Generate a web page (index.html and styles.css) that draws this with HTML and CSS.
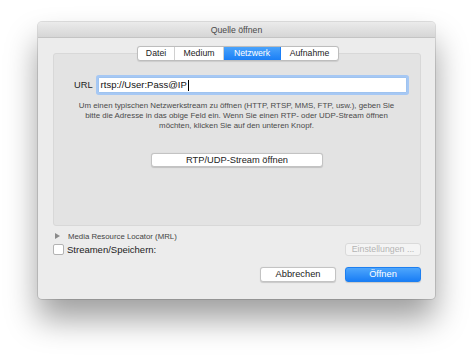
FILE: index.html
```html
<!DOCTYPE html>
<html>
<head>
<meta charset="utf-8">
<link rel="stylesheet" href="styles.css">
</head>
<body>
<div class="window">
  <div class="titlebar">Quelle öffnen</div>
  <div class="content">
    <div class="tabs">
      <div class="tab">Datei</div>
      <div class="tab">Medium</div>
      <div class="tab active">Netzwerk</div>
      <div class="tab">Aufnahme</div>
    </div>
    <div class="group">
      <div class="url-row">
        <span class="label">URL</span>
        <div class="input">rtsp://User:Pass@IP<span class="caret"></span></div>
      </div>
      <p class="desc">Um einen typischen Netzwerkstream zu öffnen (HTTP, RTSP, MMS, FTP, usw.), geben Sie<br>bitte die Adresse in das obige Feld ein. Wenn Sie einen RTP- oder UDP-Stream öffnen<br>möchten, klicken Sie auf den unteren Knopf.</p>
      <div class="btn rtp">RTP/UDP-Stream öffnen</div>
    </div>
    <div class="mrl"><span class="tri"></span>Media Resource Locator (MRL)</div>
    <div class="stream-row">
      <label class="check"><span class="box"></span>Streamen/Speichern:</label>
      <div class="btn disabled">Einstellungen ...</div>
    </div>
    <div class="actions">
      <div class="btn cancel">Abbrechen</div>
      <div class="btn primary">Öffnen</div>
    </div>
  </div>
</div>
</body>
</html>
```
FILE: styles.css
```css
html, body {
  margin: 0;
  padding: 0;
  background: #ffffff;
}
body {
  width: 474px;
  height: 355px;
  overflow: hidden;
  padding: 22px 0 0 38px;
  box-sizing: border-box;
  font-family: "Liberation Sans", Arial, sans-serif;
  color: #222;
}
.window {
  width: 397px;
  height: 277px;
  background: #ececec;
  border-radius: 4px;
  box-shadow: 0 0 0 1px rgba(0,0,0,0.12), 0 20px 32px rgba(0,0,0,0.38);
  display: flex;
  flex-direction: column;
  overflow: hidden;
}
.titlebar {
  height: 15px;
  line-height: 16px;
  text-align: center;
  font-size: 8.7px;
  color: #4a4a4a;
  background: linear-gradient(#ebebeb, #d6d6d6);
  border-bottom: 1px solid #c4c4c4;
  flex: none;
}
.content {
  padding: 8px 14px 0 15px;
  display: flex;
  flex-direction: column;
}
.tabs {
  align-self: center;
  display: flex;
  position: relative;
  z-index: 1;
  margin-left: 2px;
  background: #fff;
  border: 1px solid #bdbdbd;
  border-radius: 3px;
  height: 13px;
  overflow: hidden;
  box-shadow: 0 0.5px 1px rgba(0,0,0,0.1);
}
.tab {
  font-size: 8.7px;
  line-height: 13px;
  text-align: center;
  border-right: 1px solid #d0d0d0;
  color: #222;
}
.tab:nth-child(1) { width: 36px; }
.tab:nth-child(2) { width: 48px; }
.tab:nth-child(3) { width: 56px; }
.tab:nth-child(4) { width: 57px; border-right: none; }
.tab.active {
  background: linear-gradient(#4aa3fb, #1b7ff6);
  color: #fff;
  border-right-color: #1b7ff6;
}
.group {
  margin-top: -8px;
  height: 173px;
  box-sizing: border-box;
  background: #e3e3e3;
  border: 1px solid #d8d8d8;
  border-radius: 3px;
  padding: 23px 13px 0 20px;
  display: flex;
  flex-direction: column;
}
.url-row {
  display: flex;
  align-items: center;
  gap: 5px;
}
.label {
  font-size: 9.3px;
  color: #222;
}
.input {
  flex: 1;
  height: 14px;
  line-height: 14px;
  background: #fff;
  border: 1px solid #9fc3ef;
  box-shadow: 0 0 0 2px #a6c8f4;
  border-radius: 1px;
  padding: 0 2px;
  font-size: 9.5px;
  color: #111;
  display: flex;
  align-items: center;
}
.caret {
  display: inline-block;
  width: 1px;
  height: 11px;
  background: #000;
  margin-left: 1px;
}
.desc {
  margin: 8px 0 0 -8px;
  width: 360px;
  align-self: center;
  font-size: 7.9px;
  line-height: 10px;
  text-align: center;
  color: #4a4a4a;
  white-space: nowrap;
}
.btn {
  background: #fff;
  border: 1px solid #c3c3c3;
  border-radius: 3px;
  box-shadow: 0 0.5px 1px rgba(0,0,0,0.15);
  text-align: center;
  font-size: 9.3px;
  color: #222;
  box-sizing: border-box;
}
.rtp {
  align-self: center;
  margin: 22px 0 0 -7px;
  width: 172px;
  height: 14px;
  line-height: 12px;
}
.mrl {
  margin-top: 5px;
  font-size: 7.8px;
  color: #444;
  display: flex;
  align-items: center;
  height: 10px;
}
.tri {
  width: 0;
  height: 0;
  border-left: 5px solid #8a8a8a;
  border-top: 3px solid transparent;
  border-bottom: 3px solid transparent;
  margin: 0 8px 0 2px;
}
.stream-row {
  margin-top: 2px;
  display: flex;
  justify-content: space-between;
  align-items: center;
  height: 13px;
}
.check {
  display: flex;
  align-items: center;
  font-size: 9.5px;
  color: #222;
}
.box {
  width: 9px;
  height: 9px;
  background: #fff;
  border: 1px solid #b3b3b3;
  border-radius: 2px;
  margin-right: 3px;
}
.disabled {
  width: 76px;
  height: 13px;
  line-height: 11px;
  color: #b5b5b5;
  border-color: #dadada;
  box-shadow: none;
  background: #f4f4f4;
  font-size: 8.8px;
}
.actions {
  margin-top: 11px;
  display: flex;
  justify-content: flex-end;
  gap: 9px;
}
.cancel, .primary {
  width: 76px;
  height: 15px;
  line-height: 13px;
}
.primary {
  background: linear-gradient(#4ea6fc, #1a7ef5);
  border-color: #1d7ff0;
  color: #fff;
}
```
